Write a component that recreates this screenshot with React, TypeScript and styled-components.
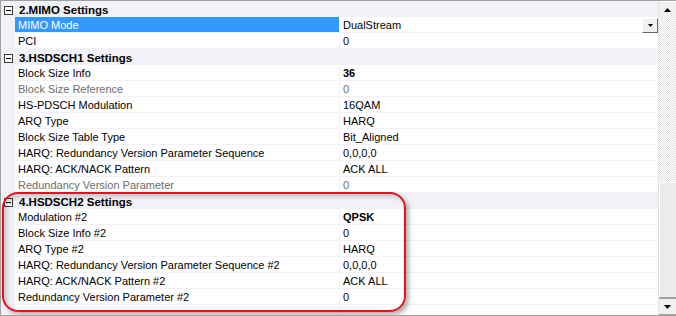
import styled, { createGlobalStyle } from "styled-components";

type Prop = {
  name: string;
  value: string;
  bold?: boolean;
  disabled?: boolean;
  selected?: boolean;
  dropdown?: boolean;
};

type Category = { title: string; props: Prop[] };

const categories: Category[] = [
  {
    title: "2.MIMO Settings",
    props: [
      { name: "MIMO Mode", value: "DualStream", selected: true, dropdown: true },
      { name: "PCI", value: "0" },
    ],
  },
  {
    title: "3.HSDSCH1 Settings",
    props: [
      { name: "Block Size Info", value: "36", bold: true },
      { name: "Block Size Reference", value: "0", disabled: true },
      { name: "HS-PDSCH Modulation", value: "16QAM" },
      { name: "ARQ Type", value: "HARQ" },
      { name: "Block Size Table Type", value: "Bit_Aligned" },
      { name: "HARQ: Redundancy Version Parameter Sequence", value: "0,0,0,0" },
      { name: "HARQ: ACK/NACK Pattern", value: "ACK ALL" },
      { name: "Redundancy Version Parameter", value: "0", disabled: true },
    ],
  },
  {
    title: "4.HSDSCH2 Settings",
    props: [
      { name: "Modulation #2", value: "QPSK", bold: true },
      { name: "Block Size Info #2", value: "0" },
      { name: "ARQ Type #2", value: "HARQ" },
      { name: "HARQ: Redundancy Version Parameter Sequence #2", value: "0,0,0,0" },
      { name: "HARQ: ACK/NACK Pattern #2", value: "ACK ALL" },
      { name: "Redundancy Version Parameter #2", value: "0" },
    ],
  },
];

export default function App() {
  return (
    <>
      <GlobalStyle />
      <Frame>
        <GridArea>
          {categories.map((cat) => (
            <div key={cat.title}>
              <CategoryRow>
                <Margin>
                  <Toggle />
                </Margin>
                <CategoryTitle>{cat.title}</CategoryTitle>
              </CategoryRow>
              {cat.props.map((p) => (
                <PropRow key={p.name}>
                  <Margin />
                  <NameCell $selected={p.selected} $disabled={p.disabled}>
                    {p.name}
                  </NameCell>
                  <ValueCell $bold={p.bold} $disabled={p.disabled}>
                    {p.value}
                    {p.dropdown && (
                      <DropButton>
                        <svg width="5" height="3" viewBox="0 0 5 3">
                          <polygon points="0,0 5,0 2.5,3" fill="#000" />
                        </svg>
                      </DropButton>
                    )}
                  </ValueCell>
                </PropRow>
              ))}
            </div>
          ))}
          <FillerRow>
            <Margin />
            <NameCell />
            <ValueCell />
          </FillerRow>
        </GridArea>
        <ScrollBar>
          <ArrowButton>
            <svg width="7" height="4" viewBox="0 0 7 4">
              <polygon points="0,4 7,4 3.5,0" fill="#000" />
            </svg>
          </ArrowButton>
          <Track />
          <Thumb />
          <ArrowButton $bottom>
            <svg width="7" height="4" viewBox="0 0 7 4">
              <polygon points="0,0 7,0 3.5,4" fill="#000" />
            </svg>
          </ArrowButton>
        </ScrollBar>
        <Highlight />
      </Frame>
    </>
  );
}

const GlobalStyle = createGlobalStyle`
  body {
    margin: 0;
    background: #fff;
    font-family: "Liberation Sans", Arial, sans-serif;
    font-size: 11px;
  }
`;

const lineColor = "#f1f2f7";

const Frame = styled.div`
  position: relative;
  display: flex;
  width: 676px;
  height: 316px;
  box-sizing: border-box;
  border-top: 1px solid #a0a0a0;
  border-left: 1px solid #a0a0a0;
  border-bottom: 1px solid #a0a0a0;
  overflow: hidden;
  background: #fff;
`;

const GridArea = styled.div`
  display: flex;
  flex-direction: column;
  width: 657px;
  overflow: hidden;
`;

const CategoryRow = styled.div`
  display: flex;
  align-items: center;
  height: 16px;
  background: ${lineColor};
`;

const Margin = styled.div`
  display: flex;
  align-items: center;
  justify-content: center;
  width: 14px;
  flex: none;
  align-self: stretch;
  background: ${lineColor};
`;

const Toggle = styled.span`
  position: relative;
  width: 7px;
  height: 7px;
  border: 1px solid #3c3c3c;
  background: #fff;
  margin: 2px 0 0 1px;
  &::after {
    content: "";
    position: absolute;
    left: 1px;
    right: 1px;
    top: 3px;
    height: 1px;
    background: #000;
  }
`;

const CategoryTitle = styled.span`
  padding: 2px 0 0 4px;
  font-size: 11.5px;
  font-weight: bold;
  color: #000;
`;

const PropRow = styled.div`
  display: grid;
  grid-template-columns: 14px 325px 1fr;
  height: 16px;
  box-sizing: border-box;
  border-bottom: 1px solid ${lineColor};
`;

const FillerRow = styled(PropRow)`
  flex: 1;
  border-bottom: none;
`;

const NameCell = styled.div<{ $selected?: boolean; $disabled?: boolean }>`
  display: flex;
  align-items: center;
  padding: 1px 0 0 3px;
  border-right: 1px solid ${lineColor};
  white-space: nowrap;
  overflow: hidden;
  background: ${(p) => (p.$selected ? "#3399ff" : "#fff")};
  color: ${(p) => (p.$selected ? "#fff" : p.$disabled ? "#6d6d6d" : "#000")};
`;

const ValueCell = styled.div<{ $bold?: boolean; $disabled?: boolean }>`
  position: relative;
  display: flex;
  align-items: center;
  padding: 1px 0 0 3px;
  white-space: nowrap;
  font-weight: ${(p) => (p.$bold ? "bold" : "normal")};
  color: ${(p) => (p.$disabled ? "#6d6d6d" : "#000")};
`;

const DropButton = styled.span`
  position: absolute;
  right: 0;
  top: 1px;
  width: 16px;
  height: 15px;
  box-sizing: border-box;
  display: flex;
  align-items: center;
  justify-content: center;
  background: #f0f0f0;
  border-top: 1px solid #fff;
  border-left: 1px solid #fff;
  border-right: 1px solid #696969;
  border-bottom: 1px solid #696969;
`;

const ScrollBar = styled.div`
  display: flex;
  flex-direction: column;
  width: 18px;
  flex: none;
  border-left: 1px solid #e3e3e3;
  box-sizing: border-box;
`;

const ArrowButton = styled.div<{ $bottom?: boolean }>`
  display: flex;
  align-items: center;
  justify-content: center;
  height: 17px;
  flex: none;
  box-sizing: border-box;
  background: #f0f0f0;
  border-top: 1px solid ${(p) => (p.$bottom ? "#a0a0a0" : "#fff")};
  border-bottom: 1px solid ${(p) => (p.$bottom ? "#a0a0a0" : "#f0f0f0")};
`;

const Track = styled.div`
  flex: 1;
  background-color: #fff;
  background-image: repeating-conic-gradient(#e2e2e2 0 25%, #fff 0 50%);
  background-size: 2px 2px;
`;

const Thumb = styled.div`
  height: 116px;
  flex: none;
  box-sizing: border-box;
  background: #ebebeb;
  border-top: 1px solid #fff;
  border-left: 1px solid #fff;
  border-bottom: 1px solid #a0a0a0;
`;

const Highlight = styled.div`
  position: absolute;
  left: 1px;
  top: 191px;
  width: 404px;
  height: 120px;
  box-sizing: border-box;
  border: 2px solid #e8101c;
  border-radius: 16px;
  box-shadow: 3px 3px 4px rgba(0, 0, 0, 0.3), inset 3px 3px 4px rgba(0, 0, 0, 0.18);
  pointer-events: none;
`;
